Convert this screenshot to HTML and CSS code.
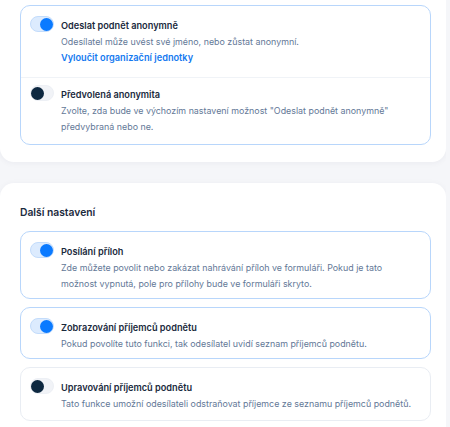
FILE: index.html
```html
<!DOCTYPE html>
<html lang="cs">
<head>
  <meta charset="UTF-8" />
  <meta name="viewport" content="width=device-width, initial-scale=1.0" />
  <title>Nastavení podnětů</title>
  <link rel="stylesheet" href="styles.css">
</head>
<body>
  <section class="card card-top">
    <div class="option-box active">
      <div class="option first">
        <span class="toggle on"></span>
        <div class="option-text">
          <h3>Odeslat podnět anonymně</h3>
          <p>Odesílatel může uvést své jméno, nebo zůstat anonymní.</p>
          <a href="#" class="link">Vyloučit organizační jednotky</a>
        </div>
      </div>
      <div class="option divided">
        <span class="toggle"></span>
        <div class="option-text">
          <h3>Předvolená anonymita</h3>
          <p>Zvolte, zda bude ve výchozím nastavení možnost "Odeslat podnět anonymně" předvybraná nebo ne.</p>
        </div>
      </div>
    </div>
  </section>

  <section class="card">
    <h2>Další nastavení</h2>

    <div class="option-box active">
      <div class="option">
        <span class="toggle on"></span>
        <div class="option-text">
          <h3>Posílání příloh</h3>
          <p>Zde můžete povolit nebo zakázat nahrávání příloh ve formuláři. Pokud je tato možnost vypnutá, pole pro přílohy bude ve formuláři skryto.</p>
        </div>
      </div>
    </div>

    <div class="option-box active">
      <div class="option">
        <span class="toggle on"></span>
        <div class="option-text">
          <h3>Zobrazování příjemců podnětu</h3>
          <p>Pokud povolíte tuto funkci, tak odesílatel uvidí seznam příjemců podnětu.</p>
        </div>
      </div>
    </div>

    <div class="option-box">
      <div class="option last">
        <span class="toggle"></span>
        <div class="option-text">
          <h3>Upravování příjemců podnětu</h3>
          <p>Tato funkce umožní odesílateli odstraňovat příjemce ze seznamu příjemců podnětů.</p>
        </div>
      </div>
    </div>
  </section>
</body>
</html>
```

FILE: styles.css
```css
* {
  margin: 0;
  padding: 0;
  box-sizing: border-box;
  font-family: 'Inter', sans-serif;
}

body {
  background: #f5f6f9;
  color: #1b2a3d;
  width: 446px;
}

.card {
  background: #fff;
  border-radius: 14px;
  padding: 22px 15px 20px 20px;
  margin-top: 21px;
  box-shadow: 0 1px 6px rgba(30, 45, 80, 0.05);
  display: flex;
  flex-direction: column;
  gap: 8px;
}

.card-top {
  margin-top: 0;
  padding-top: 5px;
  padding-bottom: 17px;
  border-radius: 0 0 14px 14px;
}

h2 {
  font-size: 10.3px;
  font-weight: 600;
  line-height: 14px;
  margin-bottom: 4px;
}

.option-box {
  border: 1px solid #e9edf3;
  border-radius: 10px;
}

.option-box.active {
  border-color: #b8d6fb;
}

.option {
  display: flex;
  gap: 7px;
  padding: 10px 16px 6px 9px;
}

.option.first {
  padding-bottom: 11px;
}

.option.divided {
  border-top: 1px solid #f0f3f7;
  padding-top: 7px;
  padding-bottom: 9px;
}

.option.last {
  padding-bottom: 8px;
}

.option-text {
  padding-top: 2px;
}

.option-text h3 {
  font-size: 9.2px;
  font-weight: 600;
  line-height: 16px;
  color: #1b2a3d;
}

.option-text p {
  font-size: 8.9px;
  line-height: 16px;
  color: #637897;
}

.link {
  display: block;
  font-size: 9.2px;
  font-weight: 600;
  line-height: 16px;
  color: #1479f0;
  text-decoration: none;
}

.toggle {
  flex: none;
  position: relative;
  width: 24px;
  height: 16px;
  border-radius: 8px;
  background: #f1f3f7;
  border: 1px solid #edf0f5;
}

.toggle::after {
  content: "";
  position: absolute;
  top: 0.5px;
  left: 0;
  width: 13px;
  height: 13px;
  border-radius: 50%;
  background: #0d2840;
}

.toggle.on {
  background: #dcebfe;
  border-color: #c3dcfb;
}

.toggle.on::after {
  left: auto;
  right: 0;
  background: #0a7aff;
}
```
